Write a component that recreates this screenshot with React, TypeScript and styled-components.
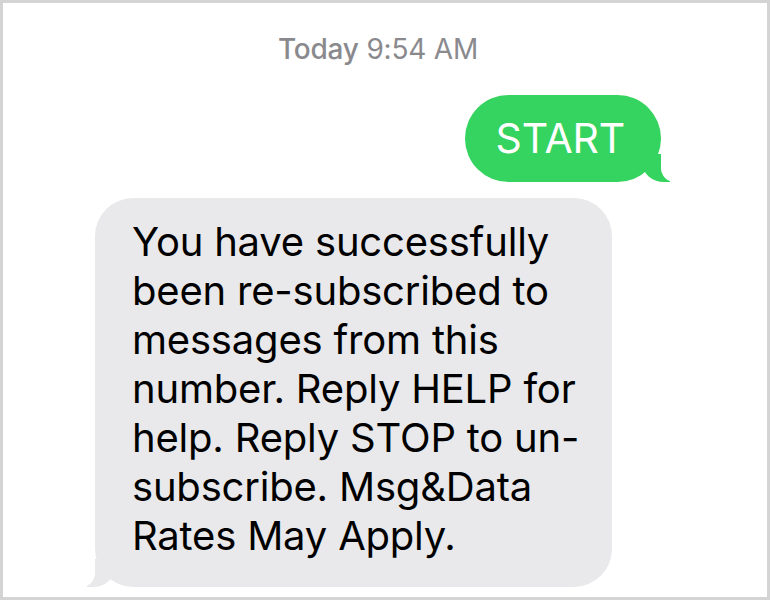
import styled, { createGlobalStyle } from "styled-components";

const GlobalStyle = createGlobalStyle`
  html, body {
    margin: 0;
    padding: 0;
    background: #ffffff;
  }
  body {
    font-family: Inter, "Noto Sans", "Liberation Sans", sans-serif;
    -webkit-font-smoothing: antialiased;
  }
`;

const Frame = styled.div`
  width: 770px;
  height: 600px;
  box-sizing: border-box;
  border: 3px solid #d4d4d4;
  background: #ffffff;
  display: flex;
  flex-direction: column;
  padding: 26px 0 0 0;
  overflow: hidden;
`;

const Stamp = styled.div`
  text-align: center;
  color: #8a8a8e;
  font-size: 28px;
  line-height: 40px;
  padding-right: 14px;
  letter-spacing: -0.2px;
  b {
    font-weight: 500;
  }
`;

const Row = styled.div<{ $mine?: boolean }>`
  display: flex;
  justify-content: ${(p) => (p.$mine ? "flex-end" : "flex-start")};
  padding: ${(p) => (p.$mine ? "26px 106px 0 0" : "16px 0 0 92px")};
`;

const Bubble = styled.div<{ $mine?: boolean }>`
  position: relative;
  box-sizing: border-box;
  background: ${(p) => (p.$mine ? "#35d35f" : "#e9e9eb")};
  color: ${(p) => (p.$mine ? "#ffffff" : "#000000")};
  border-radius: ${(p) => (p.$mine ? "44px" : "38px")};
  font-size: ${(p) => (p.$mine ? "41px" : "40px")};
  line-height: ${(p) => (p.$mine ? "87px" : "49px")};
  height: ${(p) => (p.$mine ? "87px" : "auto")};
  width: ${(p) => (p.$mine ? "auto" : "517px")};
  padding: ${(p) => (p.$mine ? "0 36px 0 31px" : "19px 0 27px 37px")};
  white-space: nowrap;
  letter-spacing: -0.2px;

  &::before {
    content: "";
    position: absolute;
    bottom: 0;
    width: 28px;
    height: 28px;
    background: inherit;
    ${(p) =>
      p.$mine
        ? "right: -9px; border-bottom-left-radius: 22px 20px;"
        : "left: -8px; border-bottom-right-radius: 22px 20px;"}
  }
  &::after {
    content: "";
    position: absolute;
    bottom: 0;
    width: 26px;
    height: 28px;
    background: #ffffff;
    ${(p) =>
      p.$mine
        ? "right: -26px; border-bottom-left-radius: 14px;"
        : "left: -26px; border-bottom-right-radius: 14px;"}
  }
`;

const lines = [
  "You have successfully",
  "been re-subscribed to",
  "messages from this",
  "number. Reply HELP for",
  "help. Reply STOP to un-",
  "subscribe. Msg&Data",
  "Rates May Apply.",
];

export default function App() {
  return (
    <>
      <GlobalStyle />
      <Frame>
        <Stamp>
          <b>Today</b> 9:54 AM
        </Stamp>
        <Row $mine>
          <Bubble $mine>START</Bubble>
        </Row>
        <Row>
          <Bubble>
            {lines.map((l, i) => (
              <div key={i}>{l}</div>
            ))}
          </Bubble>
        </Row>
      </Frame>
    </>
  );
}
